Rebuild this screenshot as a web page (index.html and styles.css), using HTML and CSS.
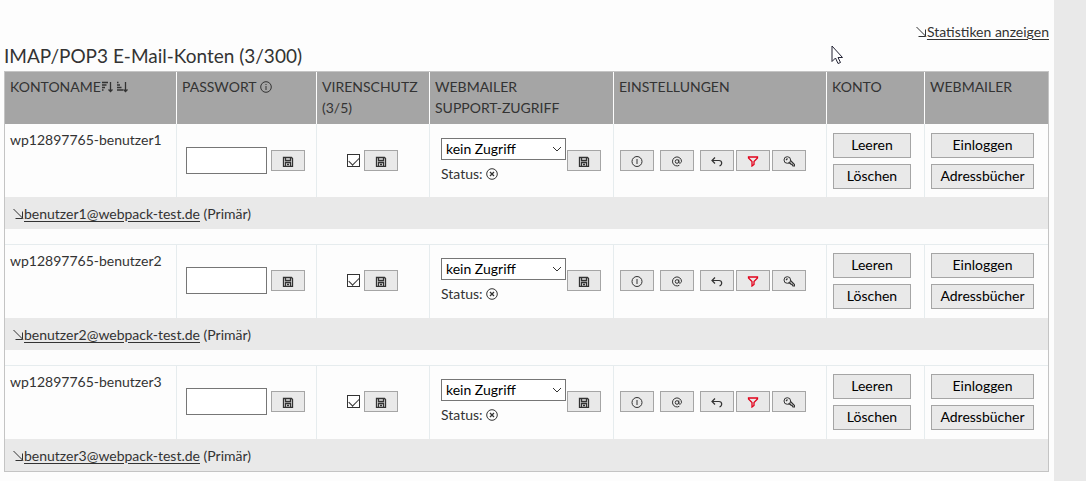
FILE: index.html
```html
<!DOCTYPE html>
<html lang="de">
<head>
    <meta charset="UTF-8">
    <title>E-Mail-Konten</title>
    <link rel="stylesheet" href="styles.css">
</head>
<body>
    <!-- icons used in the table -->
    <svg class="sprite" aria-hidden="true">
        <symbol id="arrow" viewBox="0 0 11 12"><path d="M.5 1l9.500 9.500M9.500 3.500v7h-7"/></symbol>
        <symbol id="save" viewBox="0 0 12 12"><path stroke-width="1.300" d="M1.500 2.500h8l1 1v8h-9zM3.500 2.500v3h5v-3M3.500 11.500v-4h5v4M5 9.500h2"/></symbol>
        <symbol id="info" viewBox="0 0 12 12"><circle cx="6" cy="6" r="5.300"/><path d="M6 5v4M6 3v1"/></symbol>
        <symbol id="details" viewBox="0 0 12 12"><circle cx="6" cy="6.500" r="5"/><path d="M6 4v5"/></symbol>
        <symbol id="status-off" viewBox="0 0 12 12"><circle cx="6" cy="6" r="5.300"/><path stroke-width="1.300" d="M4 4l4 4M8 4l-4 4"/></symbol>
        <symbol id="at" viewBox="0 0 12 12"><circle cx="6" cy="6.500" r="1.800"/><path d="M7.800 4.500v2.800c0 1.400 2.700 1 2.700-1a4.500 4.500 0 1 0-2.200 4"/></symbol>
        <symbol id="reply" viewBox="0 0 12 12"><path stroke-width="1.200" d="M4 2.500l-3 3l3 3M1 5.500h7c3.500 0 3.500 4.500 .5 5.500"/></symbol>
        <symbol id="filter" viewBox="0 0 12 12"><path stroke-width="1.300" d="M1.500 2h9v1l-3.500 3.500v3l-2 1.500v-4.500l-3.500-3.500z"/></symbol>
        <symbol id="key" viewBox="0 0 12 12"><circle cx="4.300" cy="5" r="3.300"/><path stroke-width="1.200" d="M3 5l1.500-1.500M5.500 8.300l1.500-.3l1 1.200l1 .2l1 1.600h1.500v-1.500l-4-4"/></symbol>
        <symbol id="sort-desc" viewBox="0 0 12 12"><path stroke-width="1.300" d="M1 1.500h6M1 4h4.500M1 6.500h3M1 9h1.500M9.500 1v9.500M7.500 8.500l2 2l2-2"/></symbol>
        <symbol id="sort-asc" viewBox="0 0 12 12"><path stroke-width="1.300" d="M1 1.500h1.500M1 4h3M1 6.500h4.500M1 9h6M9.500 1v9.500M7.500 8.500l2 2l2-2"/></symbol>
        <symbol id="chevron" viewBox="0 0 12 12"><path d="M2 4l4 4l4-4"/></symbol>
    </svg>

    <main>
        <div class="top-link">
            <svg class="icon arrow"><use href="#arrow"/></svg><a href="#">Statistiken anzeigen</a>
        </div>
        <h1>IMAP/POP3 E-Mail-Konten (3/300)</h1>

        <table class="accounts">
            <colgroup>
                <col class="col-name">
                <col class="col-password">
                <col class="col-virus">
                <col class="col-support">
                <col class="col-settings">
                <col class="col-account">
                <col>
            </colgroup>
            <thead>
                <tr>
                    <th>KONTONAME<svg class="icon"><use href="#sort-desc"/></svg> <svg class="icon"><use href="#sort-asc"/></svg></th>
                    <th>PASSWORT <svg class="icon"><use href="#info"/></svg></th>
                    <th>VIRENSCHUTZ (3/5)</th>
                    <th>WEBMAILER<br>SUPPORT-ZUGRIFF</th>
                    <th>EINSTELLUNGEN</th>
                    <th>KONTO</th>
                    <th>WEBMAILER</th>
                </tr>
            </thead>
            <tbody>
                <tr class="account">
                    <td class="name">wp12897765-benutzer1</td>
                    <td>
                        <div class="password">
                            <input type="password" aria-label="Passwort benutzer1">
                            <button class="icon-button" aria-label="Speichern"><svg class="icon"><use href="#save"/></svg></button>
                        </div>
                    </td>
                    <td>
                        <div class="virus">
                            <input type="checkbox" aria-label="Virenschutz benutzer1" checked>
                            <button class="icon-button" aria-label="Speichern"><svg class="icon"><use href="#save"/></svg></button>
                        </div>
                    </td>
                    <td>
                        <div class="support">
                            <div>
                                <div class="select">
                                    <select aria-label="Support-Zugriff benutzer1"><option>kein Zugriff</option></select>
                                    <svg class="icon"><use href="#chevron"/></svg>
                                </div>
                                <div class="status">Status: <svg class="icon"><use href="#status-off"/></svg></div>
                            </div>
                            <button class="icon-button" aria-label="Speichern"><svg class="icon"><use href="#save"/></svg></button>
                        </div>
                    </td>
                    <td>
                        <div class="settings">
                            <button class="icon-button" aria-label="Info"><svg class="icon"><use href="#details"/></svg></button>
                            <button class="icon-button" aria-label="Adressen"><svg class="icon"><use href="#at"/></svg></button>
                            <div class="tools">
                                <button class="icon-button" aria-label="Autoresponder"><svg class="icon"><use href="#reply"/></svg></button>
                                <button class="icon-button filter" aria-label="Filter"><svg class="icon"><use href="#filter"/></svg></button>
                                <button class="icon-button" aria-label="Rechte"><svg class="icon"><use href="#key"/></svg></button>
                            </div>
                        </div>
                    </td>
                    <td>
                        <div class="actions">
                            <button>Leeren</button>
                            <button>Löschen</button>
                        </div>
                    </td>
                    <td>
                        <div class="actions webmailer">
                            <button>Einloggen</button>
                            <button>Adressbücher</button>
                        </div>
                    </td>
                </tr>
                <tr class="address">
                    <td colspan="7"><svg class="icon arrow"><use href="#arrow"/></svg><a href="#">benutzer1@webpack-test.de</a> (Primär)</td>
                </tr>
                <tr class="spacer"><td colspan="7"></td></tr>
            </tbody>
            <tbody>
                <tr class="account">
                    <td class="name">wp12897765-benutzer2</td>
                    <td>
                        <div class="password">
                            <input type="password" aria-label="Passwort benutzer2">
                            <button class="icon-button" aria-label="Speichern"><svg class="icon"><use href="#save"/></svg></button>
                        </div>
                    </td>
                    <td>
                        <div class="virus">
                            <input type="checkbox" aria-label="Virenschutz benutzer2" checked>
                            <button class="icon-button" aria-label="Speichern"><svg class="icon"><use href="#save"/></svg></button>
                        </div>
                    </td>
                    <td>
                        <div class="support">
                            <div>
                                <div class="select">
                                    <select aria-label="Support-Zugriff benutzer2"><option>kein Zugriff</option></select>
                                    <svg class="icon"><use href="#chevron"/></svg>
                                </div>
                                <div class="status">Status: <svg class="icon"><use href="#status-off"/></svg></div>
                            </div>
                            <button class="icon-button" aria-label="Speichern"><svg class="icon"><use href="#save"/></svg></button>
                        </div>
                    </td>
                    <td>
                        <div class="settings">
                            <button class="icon-button" aria-label="Info"><svg class="icon"><use href="#details"/></svg></button>
                            <button class="icon-button" aria-label="Adressen"><svg class="icon"><use href="#at"/></svg></button>
                            <div class="tools">
                                <button class="icon-button" aria-label="Autoresponder"><svg class="icon"><use href="#reply"/></svg></button>
                                <button class="icon-button filter" aria-label="Filter"><svg class="icon"><use href="#filter"/></svg></button>
                                <button class="icon-button" aria-label="Rechte"><svg class="icon"><use href="#key"/></svg></button>
                            </div>
                        </div>
                    </td>
                    <td>
                        <div class="actions">
                            <button>Leeren</button>
                            <button>Löschen</button>
                        </div>
                    </td>
                    <td>
                        <div class="actions webmailer">
                            <button>Einloggen</button>
                            <button>Adressbücher</button>
                        </div>
                    </td>
                </tr>
                <tr class="address">
                    <td colspan="7"><svg class="icon arrow"><use href="#arrow"/></svg><a href="#">benutzer2@webpack-test.de</a> (Primär)</td>
                </tr>
                <tr class="spacer"><td colspan="7"></td></tr>
            </tbody>
            <tbody>
                <tr class="account">
                    <td class="name">wp12897765-benutzer3</td>
                    <td>
                        <div class="password">
                            <input type="password" aria-label="Passwort benutzer3">
                            <button class="icon-button" aria-label="Speichern"><svg class="icon"><use href="#save"/></svg></button>
                        </div>
                    </td>
                    <td>
                        <div class="virus">
                            <input type="checkbox" aria-label="Virenschutz benutzer3" checked>
                            <button class="icon-button" aria-label="Speichern"><svg class="icon"><use href="#save"/></svg></button>
                        </div>
                    </td>
                    <td>
                        <div class="support">
                            <div>
                                <div class="select">
                                    <select aria-label="Support-Zugriff benutzer3"><option>kein Zugriff</option></select>
                                    <svg class="icon"><use href="#chevron"/></svg>
                                </div>
                                <div class="status">Status: <svg class="icon"><use href="#status-off"/></svg></div>
                            </div>
                            <button class="icon-button" aria-label="Speichern"><svg class="icon"><use href="#save"/></svg></button>
                        </div>
                    </td>
                    <td>
                        <div class="settings">
                            <button class="icon-button" aria-label="Info"><svg class="icon"><use href="#details"/></svg></button>
                            <button class="icon-button" aria-label="Adressen"><svg class="icon"><use href="#at"/></svg></button>
                            <div class="tools">
                                <button class="icon-button" aria-label="Autoresponder"><svg class="icon"><use href="#reply"/></svg></button>
                                <button class="icon-button filter" aria-label="Filter"><svg class="icon"><use href="#filter"/></svg></button>
                                <button class="icon-button" aria-label="Rechte"><svg class="icon"><use href="#key"/></svg></button>
                            </div>
                        </div>
                    </td>
                    <td>
                        <div class="actions">
                            <button>Leeren</button>
                            <button>Löschen</button>
                        </div>
                    </td>
                    <td>
                        <div class="actions webmailer">
                            <button>Einloggen</button>
                            <button>Adressbücher</button>
                        </div>
                    </td>
                </tr>
                <tr class="address">
                    <td colspan="7"><svg class="icon arrow"><use href="#arrow"/></svg><a href="#">benutzer3@webpack-test.de</a> (Primär)</td>
                </tr>
            </tbody>
        </table>
    </main>

    <svg class="cursor" viewBox="0 0 13 20" aria-hidden="true"><path d="M1 1v15.500l3.500-3.500l2.500 5.500l2.500-1l-2.500-5h4.500z"/></svg>
</body>
</html>
```
FILE: styles.css
```css
* {
    box-sizing: border-box;
}

body {
    margin: 0;
    min-height: 100vh;
    padding-right: 32px;
    background-color: #e9e9e9;
    color: #333;
    font-family: Lato, "Open Sans", sans-serif;
    font-size: 14px;
    line-height: 21px;
}

main {
    min-height: 100vh;
    padding: 21px 5px 0 4px;
    background-color: #fdfdfd;
}

a {
    color: #333;
    text-underline-offset: 2px;
}

h1 {
    margin: 0;
    padding: 2px 0 3px;
    font-size: 19px;
    font-weight: 400;
    line-height: 24px;
}

button,
input,
select {
    margin: 0;
    font-family: inherit;
    font-size: 14px;
}

.sprite {
    display: none;
}

.icon {
    width: 12px;
    height: 12px;
    fill: none;
    stroke: #333;
    stroke-width: 1;
    vertical-align: -1px;
}

.arrow {
    width: 11px;
}

.top-link {
    text-align: right;
}

.accounts {
    width: 100%;
    table-layout: fixed;
    border: 1px solid #c4c4c4;
    border-spacing: 0;
}

.col-name {
    width: 171px;
}

.col-password {
    width: 140px;
}

.col-virus {
    width: 113px;
}

.col-support {
    width: 184px;
}

.col-settings {
    width: 213px;
}

.col-account {
    width: 98px;
}

th {
    height: 52px;
    padding: 4px 5px 6px;
    background-color: #a5a5a5;
    font-weight: 400;
    text-align: left;
    vertical-align: top;
}

th + th {
    border-left: 1px solid #fdfdfd;
}

td {
    padding: 0;
}

.account td {
    height: 73px;
}

.account td + td {
    border-left: 1px solid #e6ecee;
}

tbody + tbody .account td {
    height: 74px;
    padding-bottom: 2px;
    border-top: 1px solid #e6ecee;
}

.account .name {
    padding: 5px;
    vertical-align: top;
}

.password,
.virus,
.support,
.settings,
.tools {
    display: flex;
    align-items: center;
}

.password {
    gap: 4px;
    padding-left: 9px;
}

.password input {
    width: 81px;
    height: 27px;
    border: 1px solid #767676;
    background-color: #fff;
}

.virus {
    gap: 4px;
    padding-left: 30px;
}

.virus input {
    display: grid;
    place-items: center;
    width: 13px;
    height: 13px;
    appearance: none;
    border: 1px solid #333;
    background-color: #fff;
}

.virus input:checked::before {
    content: "";
    width: 9px;
    height: 5px;
    border: solid #333;
    border-width: 0 0 1px 1px;
    transform: translateY(-1px) rotate(-45deg);
}

.support {
    gap: 1px;
    padding-left: 11px;
}

.select {
    position: relative;
}

.select select {
    display: block;
    width: 125px;
    height: 22px;
    padding: 0 4px;
    appearance: none;
    border: 1px solid #767676;
    border-radius: 0;
    background-color: #fff;
    color: #000;
}

.select .icon {
    position: absolute;
    top: 5px;
    right: 3px;
    pointer-events: none;
}

.status {
    padding-top: 3px;
}

.settings {
    gap: 6px;
    padding-left: 6px;
}

.tools {
    gap: 2px;
}

.icon-button,
.actions button {
    padding: 0;
    border: 1px solid #a5a5a5;
    background-color: #e9e9e9;
    color: #000;
    cursor: pointer;
}

.icon-button {
    display: flex;
    align-items: center;
    justify-content: center;
    width: 34px;
    height: 21px;
}

.filter .icon {
    stroke: #e2001a;
}

.actions {
    display: grid;
    gap: 6px;
    width: 84px;
    padding-left: 6px;
}

.webmailer {
    width: 109px;
}

.actions button {
    height: 25px;
    padding-bottom: 2px;
}

.address td {
    height: 32px;
    padding-left: 8px;
    background-color: #e9e9e9;
}

.spacer td {
    height: 15px;
}

.cursor {
    position: absolute;
    top: 45px;
    left: 831px;
    width: 13px;
    height: 20px;
    fill: #fff;
    stroke: #223;
}
```
